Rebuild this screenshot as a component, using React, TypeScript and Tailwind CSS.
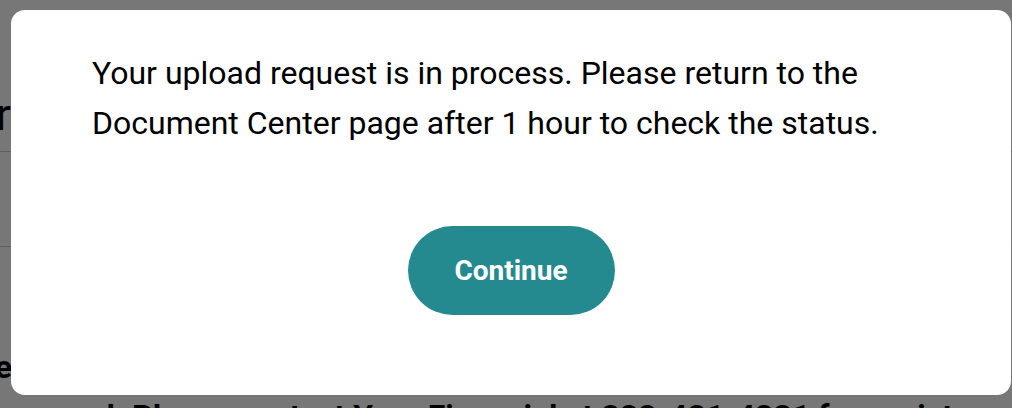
export default function App() {
  return (
    <div className="relative h-[408px] w-[1012px] overflow-hidden bg-white font-['Roboto',sans-serif] text-black">
      {/* page behind the dialog */}
      <div className="flex flex-col">
        <div className="flex h-[152px] items-end border-b border-[#cccccc] pb-[14px]">
          <div className="flex w-[11px] justify-end whitespace-nowrap text-[44px] leading-none">
            Document Center
          </div>
        </div>
        <div className="h-[95px] border-b border-[#cccccc]" />
        <div className="h-[99px]" />
        <div className="text-[32px] font-bold leading-[43px]">
          <div className="flex w-[12px] justify-end whitespace-nowrap">
            We were unable to complete your upload because an issue
          </div>
          <div className="-ml-[13px] mt-[6px] whitespace-nowrap">
            occurred. Please contact Your Financial at 888-481-4331 for assistance.
          </div>
        </div>
      </div>

      {/* overlay + dialog */}
      <div className="absolute inset-0 flex items-start bg-[rgba(0,0,0,0.535)] pl-[11px] pt-[10px]">
        <div className="flex h-[385px] w-[1000px] flex-col rounded-[14px] bg-white px-[81px] pt-[38px]">
          <p className="whitespace-nowrap text-[32px] leading-[50px] text-black">
            Your upload request is in process. Please return to the
            <br />
            Document Center page after 1 hour to check the status.
          </p>
          <div className="mt-[78px] flex justify-center">
            <button className="h-[89px] w-[207px] rounded-full bg-[#248a8f] text-[28px] font-bold text-white">
              Continue
            </button>
          </div>
        </div>
      </div>
    </div>
  );
}
